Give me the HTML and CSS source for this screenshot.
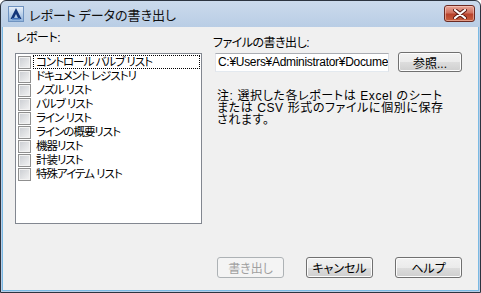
FILE: index.html
```html
<!DOCTYPE html>
<html lang="ja">
<head>
  <meta charset="UTF-8">
  <title>レポート データの書き出し</title>
  <link rel="stylesheet" href="styles.css">
</head>
<body>
  <div class="window">
    <div class="titlebar">
      <svg class="app-icon" width="16" height="16" viewBox="0 0 16 16">
        <defs>
          <linearGradient id="bg" x1="0" y1="0" x2="0" y2="1">
            <stop offset="0" stop-color="#e9f1fa"/>
            <stop offset="1" stop-color="#8eb1da"/>
          </linearGradient>
        </defs>
        <rect x="0.5" y="0.5" width="15" height="15" fill="url(#bg)" stroke="#6f93c0"/>
        <polygon points="8,2 13.5,13 10.5,13 8,8 5.5,13 2.5,13" fill="#13357a"/>
        <rect x="4" y="12" width="8" height="1.5" fill="#3f6fb8"/>
      </svg>
      <span class="title">レポート データの書き出し</span>
      <button class="close" type="button" aria-label="閉じる">
        <svg width="14" height="10" viewBox="0 0 14 10">
          <path d="M2 1 L12 9 M12 1 L2 9" stroke="#5a1a12" stroke-width="4" stroke-linecap="round"/>
          <path d="M2 1 L12 9 M12 1 L2 9" stroke="#ffffff" stroke-width="2.2" stroke-linecap="round"/>
        </svg>
      </button>
    </div>

    <div class="client">
      <div class="panes">
        <div class="pane-left">
          <div class="label">レポート:</div>
          <div class="listbox">
            <div class="item"><span class="check"></span><span class="text focus">コントロール バルブ リスト</span></div>
            <div class="item"><span class="check"></span><span class="text">ドキュメント レジストリ</span></div>
            <div class="item"><span class="check"></span><span class="text">ノズル リスト</span></div>
            <div class="item"><span class="check"></span><span class="text">バルブ リスト</span></div>
            <div class="item"><span class="check"></span><span class="text">ライン リスト</span></div>
            <div class="item"><span class="check"></span><span class="text">ラインの概要リスト</span></div>
            <div class="item"><span class="check"></span><span class="text">機器リスト</span></div>
            <div class="item"><span class="check"></span><span class="text">計装リスト</span></div>
            <div class="item"><span class="check"></span><span class="text">特殊アイテム リスト</span></div>
          </div>
        </div>

        <div class="pane-right">
          <div class="label">ファイルの書き出し:</div>
          <div class="path-row">
            <div class="field">C:¥Users¥Administrator¥Documents</div>
            <button class="btn browse" type="button">参照...</button>
          </div>
          <p class="note">注: 選択した各レポートは Excel のシート<br>または CSV 形式のファイルに個別に保存<br>されます。</p>
        </div>
      </div>

      <div class="footer">
        <button class="btn" type="button" disabled>書き出し</button>
        <button class="btn" type="button">キャンセル</button>
        <button class="btn" type="button">ヘルプ</button>
      </div>
    </div>
  </div>
</body>
</html>
```

FILE: styles.css
```css
body {
  margin: 0;
  font-family: "Liberation Sans", "Noto Sans CJK JP", sans-serif;
  font-size: 12px;
  color: #000;
  font-feature-settings: "palt";
}
.window {
  width: 481px;
  height: 293px;
  box-sizing: border-box;
  border: 1px solid #2c3440;
  border-radius: 6px 6px 0 0;
  padding: 0 1px 1px;
  background: linear-gradient(#cbdaec, #b9cde5 26px, #b9cde6);
  display: flex;
  flex-direction: column;
}
.titlebar {
  height: 26px;
  display: flex;
  align-items: center;
  position: relative;
}
.app-icon {
  margin: 0 5px 1px 6px;
}
.title {
  font-family: "Noto Sans CJK JP", sans-serif;
  font-size: 13px;
  color: #111;
}
.close {
  position: absolute;
  right: 4px;
  top: 4px;
  width: 31px;
  height: 17px;
  padding: 0;
  border: 1px solid #6b2a22;
  border-radius: 3px;
  background: linear-gradient(#e8a597, #d0725f 45%, #b8422b 55%, #c8603f);
  box-shadow: inset 0 0 0 1px rgba(255, 220, 210, 0.5);
  display: flex;
  align-items: center;
  justify-content: center;
}
.client {
  flex: 1;
  background: #f0f0f0;
  border: 1px solid #79b9e3;
  border-top: none;
  display: flex;
  flex-direction: column;
  padding: 0 0 12px;
}
.panes {
  display: flex;
}
.pane-left {
  margin-left: 12px;
  width: 187px;
}
.label {
  line-height: 14px;
  letter-spacing: -0.5px;
}
.pane-left .label {
  padding: 4px 0 0 1px;
  margin-bottom: 8px;
}
.listbox {
  height: 171px;
  box-sizing: border-box;
  border: 1px solid #828790;
  background: #fff;
  padding: 1px 1px 0;
}
.item {
  display: flex;
  align-items: center;
  height: 14px;
}
.check {
  width: 11px;
  height: 11px;
  margin: 0 2px 0 1px;
  border: 1px solid #8f8f8f;
  background: linear-gradient(135deg, #c9ccd1, #f4f4f4);
  box-shadow: inset 0 0 0 1px #f2f2f2;
  flex: none;
}
.text {
  flex: 1;
  padding: 0 2px;
  font-size: 11.5px;
  line-height: 12px;
  border: 1px dotted transparent;
  white-space: nowrap;
  letter-spacing: -1px;
}
.text.focus {
  border-color: #000;
}
.pane-right {
  margin-left: 11px;
}
.pane-right .label {
  padding-top: 9px;
}
.path-row {
  display: flex;
  align-items: center;
  margin-top: 2px;
  padding-left: 2px;
}
.field {
  width: 168px;
  height: 17px;
  border: 1px solid #abadb3;
  border-color: #abadb3 #dbdfe6 #e3e9ef #e2e3ea;
  background: #fff;
  padding: 0 2px;
  line-height: 17px;
  overflow: hidden;
  white-space: nowrap;
  letter-spacing: -0.3px;
}
.btn {
  width: 67px;
  height: 21px;
  padding: 0;
  font: inherit;
  color: #000;
  border: 1px solid #707070;
  border-radius: 3px;
  background: linear-gradient(#f2f2f2, #ebebeb 50%, #dddddd 51%, #cfcfcf);
  box-shadow: inset 0 0 0 1px #fcfcfc;
}
.browse {
  width: 64px;
  height: 20px;
  margin-left: 9px;
}
.btn:disabled {
  color: #a0a0a0;
  border-color: #adb2b5;
  background: #f4f4f4;
  box-shadow: none;
}
.note {
  margin: 18px 0 0 4px;
  line-height: 12px;
  letter-spacing: 0.6px;
}
.footer {
  margin-top: auto;
  display: flex;
  gap: 22px;
  padding-left: 214px;
}
```
